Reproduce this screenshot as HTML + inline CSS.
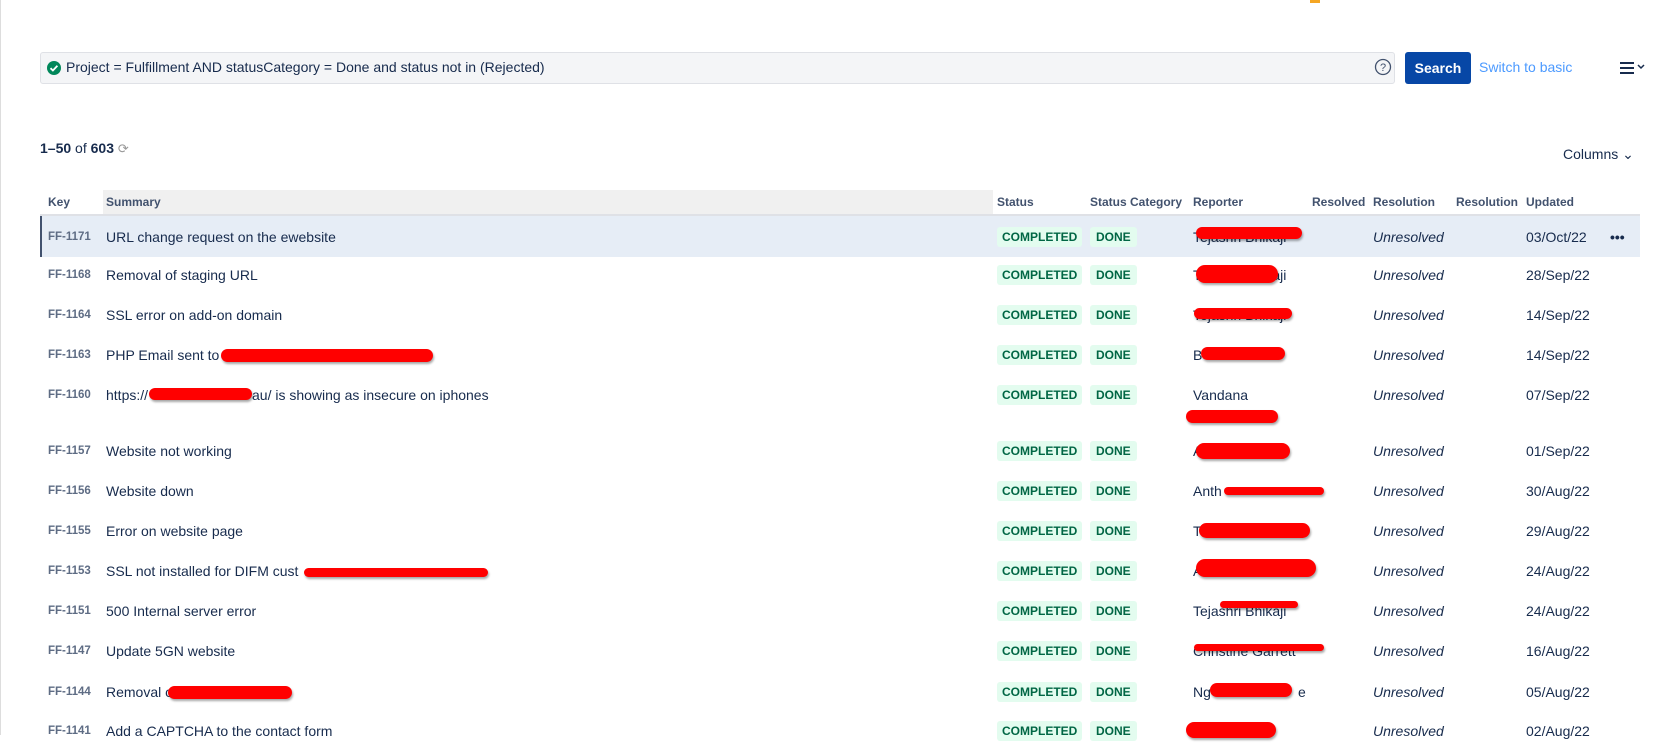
<!DOCTYPE html>
<html><head><meta charset="utf-8"><style>
*{margin:0;padding:0;box-sizing:border-box}
body{width:1664px;height:735px;overflow:hidden;background:#fff;font-family:"Liberation Sans",sans-serif;color:#172b4d;font-size:14px;position:relative}
.a{position:absolute;white-space:nowrap}
.row{position:absolute;left:40px;width:1600px;height:40px}
.row .a{top:50%;transform:translateY(-50%)}
.k{left:8px;font-size:11.5px;color:#5e6c84;font-weight:bold}
.s{left:66px}
.l1{left:957px;background:#e3fcef;color:#006644;font-weight:bold;font-size:12px;padding:3px 5px;border-radius:3px}
.l2{left:1050px;background:#e3fcef;color:#006644;font-weight:bold;font-size:12px;padding:3px 6px;border-radius:3px}
.r{left:1153px}
.u{left:1333px;font-style:italic}
.d{left:1486px}
.red{position:absolute;background:#f00;border-radius:9px;box-shadow:1px 2px 2px rgba(0,0,0,.35)}
.h{position:absolute;top:195px;font-size:12px;color:#42526e;font-weight:bold}
</style></head><body>
<div class="a" style="left:0;top:0;width:1px;height:735px;background:#ddd"></div>
<div class="a" style="left:40px;top:52px;width:1355px;height:32px;background:#f4f5f7;border:1px solid #dfe1e6;border-radius:3px"></div>
<svg class="a" style="left:46px;top:60px" width="16" height="16" viewBox="0 0 16 16"><circle cx="8" cy="8" r="7" fill="#00875a"/><path d="M4.5 8.2l2.4 2.3 4.5-4.7" stroke="#fff" stroke-width="1.8" fill="none"/></svg>
<div class="a" style="left:66px;top:59px;font-size:14px">Project = Fulfillment AND statusCategory = Done and status not in (Rejected)</div>
<svg class="a" style="left:1374px;top:58px" width="18" height="18" viewBox="0 0 18 18"><circle cx="9" cy="9" r="7.5" fill="none" stroke="#42526e" stroke-width="1.3"/><text x="9" y="13" text-anchor="middle" font-size="11" fill="#42526e" font-family="Liberation Sans">?</text></svg>
<div class="a" style="left:1405px;top:52px;width:66px;height:32px;background:#0747a6;border-radius:3px;color:#fff;font-weight:bold;font-size:14px;line-height:32px;text-align:center">Search</div>
<div class="a" style="left:1479px;top:59px;color:#4c9aff;font-size:14px">Switch to basic</div>
<svg class="a" style="left:1620px;top:60px" width="30" height="16"><rect x="0" y="2" width="14" height="2" fill="#172b4d"/><rect x="0" y="7" width="14" height="2" fill="#172b4d"/><rect x="0" y="12" width="14" height="2" fill="#172b4d"/><path d="M18 5l3 3 3-3" stroke="#172b4d" stroke-width="1.5" fill="none"/></svg>
<div class="a" style="left:1310px;top:0;width:10px;height:3px;background:#f5a623"></div>
<div class="a" style="left:40px;top:140px;font-size:14px"><b>1–50</b> of <b>603</b> <span style="color:#999;font-size:13px">⟳</span></div>
<div class="a" style="left:1563px;top:146px;font-size:14px">Columns ⌄</div>
<div class="a" style="left:103px;top:190px;width:890px;height:25px;background:#f0f0f0"></div>
<div class="a" style="left:40px;top:214px;width:1600px;height:2px;background:#dfe1e6"></div>
<div class="h" style="left:48px">Key</div>
<div class="h" style="left:106px">Summary</div>
<div class="h" style="left:997px">Status</div>
<div class="h" style="left:1090px">Status Category</div>
<div class="h" style="left:1193px">Reporter</div>
<div class="h" style="left:1312px">Resolved</div>
<div class="h" style="left:1373px">Resolution</div>
<div class="h" style="left:1456px">Resolution</div>
<div class="h" style="left:1526px">Updated</div>

<div class="row" style="top:216px;height:41px;background:#e6edf6;box-shadow:inset 2px 0 0 #42526e"><span class="a k">FF-1171</span><span class="a s">URL change request on the ewebsite</span><span class="a l1">COMPLETED</span><span class="a l2">DONE</span><span class="a r">Tejashri Bhikaji</span><span class="a u">Unresolved</span><span class="a d">03/Oct/22</span><span class="a" style="left:1570px;font-weight:bold">•••</span></div>
<div class="red" style="left:1196px;top:227px;width:106px;height:12px"></div>

<div class="row" style="top:255px"><span class="a k">FF-1168</span><span class="a s">Removal of staging URL</span><span class="a l1">COMPLETED</span><span class="a l2">DONE</span><span class="a r">Tejashri Bhikaji</span><span class="a u">Unresolved</span><span class="a d">28/Sep/22</span></div>
<div class="red" style="left:1196px;top:265px;width:82px;height:18px"></div>

<div class="row" style="top:295px"><span class="a k">FF-1164</span><span class="a s">SSL error on add-on domain</span><span class="a l1">COMPLETED</span><span class="a l2">DONE</span><span class="a r">Tejashri Bhikaji</span><span class="a u">Unresolved</span><span class="a d">14/Sep/22</span></div>
<div class="red" style="left:1194px;top:308px;width:98px;height:11px"></div>

<div class="row" style="top:335px"><span class="a k">FF-1163</span><span class="a s">PHP Email sent to</span><span class="a l1">COMPLETED</span><span class="a l2">DONE</span><span class="a r">B</span><span class="a u">Unresolved</span><span class="a d">14/Sep/22</span></div>
<div class="red" style="left:221px;top:349px;width:212px;height:13px"></div>
<div class="red" style="left:1201px;top:347px;width:84px;height:13px"></div>

<div class="row" style="top:375px"><span class="a k">FF-1160</span><span class="a s">https://</span><span class="a" style="left:212px">au/ is showing as insecure on iphones</span><span class="a l1">COMPLETED</span><span class="a l2">DONE</span><span class="a r">Vandana</span><span class="a u">Unresolved</span><span class="a d">07/Sep/22</span></div>
<div class="red" style="left:149px;top:388px;width:103px;height:12px"></div>
<div class="red" style="left:1186px;top:410px;width:92px;height:13px"></div>

<div class="row" style="top:431px"><span class="a k">FF-1157</span><span class="a s">Website not working</span><span class="a l1">COMPLETED</span><span class="a l2">DONE</span><span class="a r">A</span><span class="a u">Unresolved</span><span class="a d">01/Sep/22</span></div>
<div class="red" style="left:1196px;top:443px;width:94px;height:16px"></div>

<div class="row" style="top:471px"><span class="a k">FF-1156</span><span class="a s">Website down</span><span class="a l1">COMPLETED</span><span class="a l2">DONE</span><span class="a r">Anth</span><span class="a u">Unresolved</span><span class="a d">30/Aug/22</span></div>
<div class="red" style="left:1224px;top:487px;width:100px;height:8px"></div>

<div class="row" style="top:511px"><span class="a k">FF-1155</span><span class="a s">Error on website page</span><span class="a l1">COMPLETED</span><span class="a l2">DONE</span><span class="a r">T</span><span class="a u">Unresolved</span><span class="a d">29/Aug/22</span></div>
<div class="red" style="left:1199px;top:523px;width:111px;height:15px"></div>

<div class="row" style="top:551px"><span class="a k">FF-1153</span><span class="a s">SSL not installed for DIFM cust</span><span class="a l1">COMPLETED</span><span class="a l2">DONE</span><span class="a r">A</span><span class="a u">Unresolved</span><span class="a d">24/Aug/22</span></div>
<div class="red" style="left:304px;top:568px;width:184px;height:9px"></div>
<div class="red" style="left:1196px;top:559px;width:120px;height:18px"></div>

<div class="row" style="top:591px"><span class="a k">FF-1151</span><span class="a s">500 Internal server error</span><span class="a l1">COMPLETED</span><span class="a l2">DONE</span><span class="a r">Tejashri Bhikaji</span><span class="a u">Unresolved</span><span class="a d">24/Aug/22</span></div>
<div class="red" style="left:1220px;top:601px;width:78px;height:7px"></div>

<div class="row" style="top:631px"><span class="a k">FF-1147</span><span class="a s">Update 5GN website</span><span class="a l1">COMPLETED</span><span class="a l2">DONE</span><span class="a r">Christine Garrett</span><span class="a u">Unresolved</span><span class="a d">16/Aug/22</span></div>
<div class="red" style="left:1194px;top:644px;width:130px;height:7px"></div>

<div class="row" style="top:672px"><span class="a k">FF-1144</span><span class="a s">Removal o</span><span class="a l1">COMPLETED</span><span class="a l2">DONE</span><span class="a r">Ng</span><span class="a" style="left:1258px">e</span><span class="a u">Unresolved</span><span class="a d">05/Aug/22</span></div>
<div class="red" style="left:168px;top:686px;width:124px;height:13px"></div>
<div class="red" style="left:1210px;top:683px;width:82px;height:14px"></div>

<div class="row" style="top:711px"><span class="a k">FF-1141</span><span class="a s">Add a CAPTCHA to the contact form</span><span class="a l1">COMPLETED</span><span class="a l2">DONE</span><span class="a u">Unresolved</span><span class="a d">02/Aug/22</span></div>
<div class="red" style="left:1186px;top:722px;width:90px;height:16px"></div>
</body></html>
